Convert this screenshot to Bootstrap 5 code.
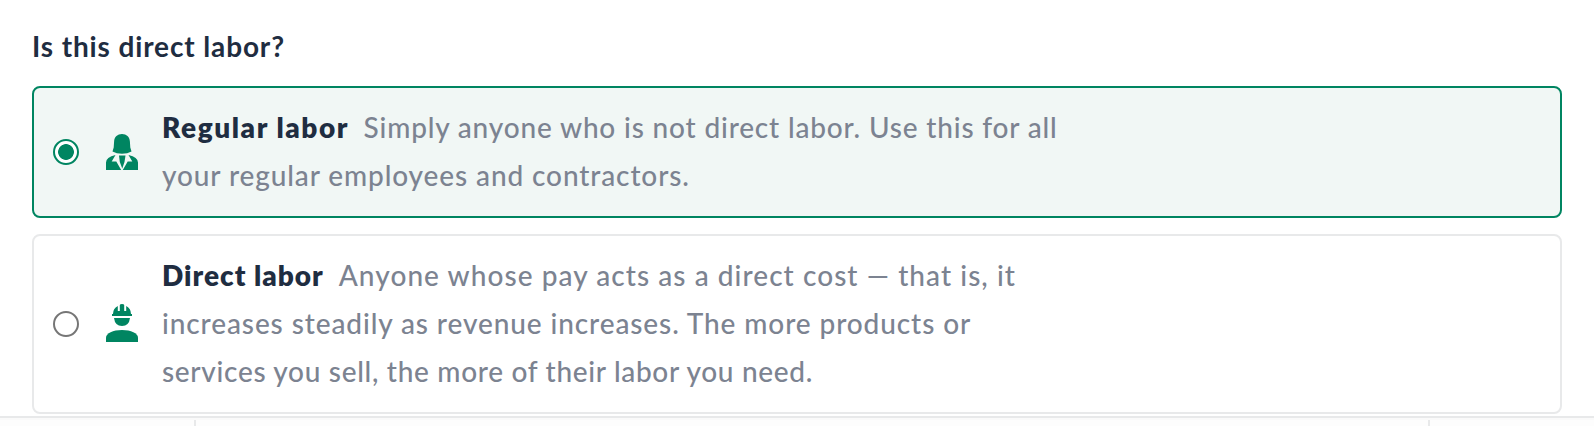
<!DOCTYPE html>
<html lang="en">
<head>
<meta charset="utf-8">
<meta name="viewport" content="width=device-width, initial-scale=1">
<title>Direct labor</title>
<link href="https://cdn.jsdelivr.net/npm/bootstrap@5.3.0/dist/css/bootstrap.min.css" rel="stylesheet">
<style>
  :root { --brand: #008561; --ink: #1f2d41; --soft: #7c8391; --line: #e8e9ea; }
  body { font-family: Lato, sans-serif; font-size: 28px; line-height: 48px; color: var(--ink); height: 426px; overflow: hidden; }
  .question { padding: 22px 32px 0; height: 416px; }
  .question legend { font-size: 28px; line-height: 48px; font-weight: 700; letter-spacing: .87px; margin-bottom: 16px; padding-left: 0; }
  .choice { border: 2px solid var(--line); border-radius: 8px; padding: 16px 19px; }
  .choice.selected { border-color: var(--brand); background: #f1f7f5; }
  .choice .form-check-input { width: 26px; height: 26px; margin: 0; border: 2px solid #767676; background: #fff; box-shadow: none; }
  .choice .form-check-input:checked { border-color: var(--brand); background: radial-gradient(circle, var(--brand) 7.5px, #fff 8.2px); }
  .choice svg { width: 32px; margin-left: 27px; margin-right: 24px; fill: var(--brand); }
  .choice .worker { margin-bottom: 2px; }
  .copy { color: var(--soft); font-weight: 500; white-space: nowrap; margin: -1px 0 1px; }
  .copy strong { color: var(--ink); font-weight: 800; }
  .footer-bar { height: 10px; border-top: 2px solid var(--line); padding: 2px 164px 0 194px; background: linear-gradient(#fafafa 2px, #fdfdfd 2px); }
  .footer-bar div { border: solid var(--line); border-width: 0 2px; height: 6px; }
  .t1 { letter-spacing: 1.57px; margin-right: 14.5px; }
  .t2 { letter-spacing: .83px; }
  .t3 { letter-spacing: .89px; }
  .t4 { letter-spacing: 1px; margin-right: 15px; }
  .t5 { letter-spacing: 1.06px; }
  .t6 { letter-spacing: .9px; }
  .t7 { letter-spacing: .69px; }
</style>
</head>
<body>
<fieldset class="question">
  <legend>Is this direct labor?</legend>
  <div class="d-flex flex-column gap-3">
    <label class="choice selected d-flex align-items-center">
      <input class="form-check-input flex-shrink-0" type="radio" name="labor" checked>
      <svg class="flex-shrink-0" height="36" viewBox="0 0 32 36" aria-hidden="true">
        <path d="M16 0C11.500 0 8.400 2.800 8.100 7.500L7.700 13.500L6.500 17.500Q10.500 19.800 16 19.800T25.500 17.500L24.300 13.500L23.900 7.500C23.600 2.800 20.500 0 16 0Z"/>
        <path d="M9.500 21L5.700 27.500H10.300L15.200 36H0V28.500Q0 23.300 9.500 21Z"/>
        <path d="M22.500 21L26.300 27.500H21.700L16.800 36H32V28.500Q32 23.300 22.500 21Z"/>
        <path d="M13 21.500H19.500L18.500 28L16.250 34.500L13.800 28Z"/>
      </svg>
      <span class="copy"><strong class="t1">Regular labor</strong><span class="t2">Simply anyone who is not direct labor. Use this for all</span><br><span class="t3">your regular employees and contractors.</span></span>
    </label>
    <label class="choice d-flex align-items-center">
      <input class="form-check-input flex-shrink-0" type="radio" name="labor">
      <svg class="worker flex-shrink-0" height="38" viewBox="0 0 32 38" aria-hidden="true">
        <path d="M6 12V10H7Q7 4.500 11.800 2V7H13.800V1Q14 0 16 0T18.200 1V7H20.200V2Q25 4.500 25 10H26V12Z"/>
        <path d="M8 14H24Q23 22 16 22T8 14Z"/>
        <path d="M0 38V33.500C0 29.500 7 26 16 26S32 29.500 32 33.500V38Z"/>
      </svg>
      <span class="copy"><strong class="t4">Direct labor</strong><span class="t5">Anyone whose pay acts as a direct cost — that is, it</span><br><span class="t6">increases steadily as revenue increases. The more products or</span><br><span class="t7">services you sell, the more of their labor you need.</span></span>
    </label>
  </div>
</fieldset>
<div class="footer-bar"><div></div></div>
<script src="https://cdn.jsdelivr.net/npm/bootstrap@5.3.0/dist/js/bootstrap.bundle.min.js"></script>
</body>
</html>
